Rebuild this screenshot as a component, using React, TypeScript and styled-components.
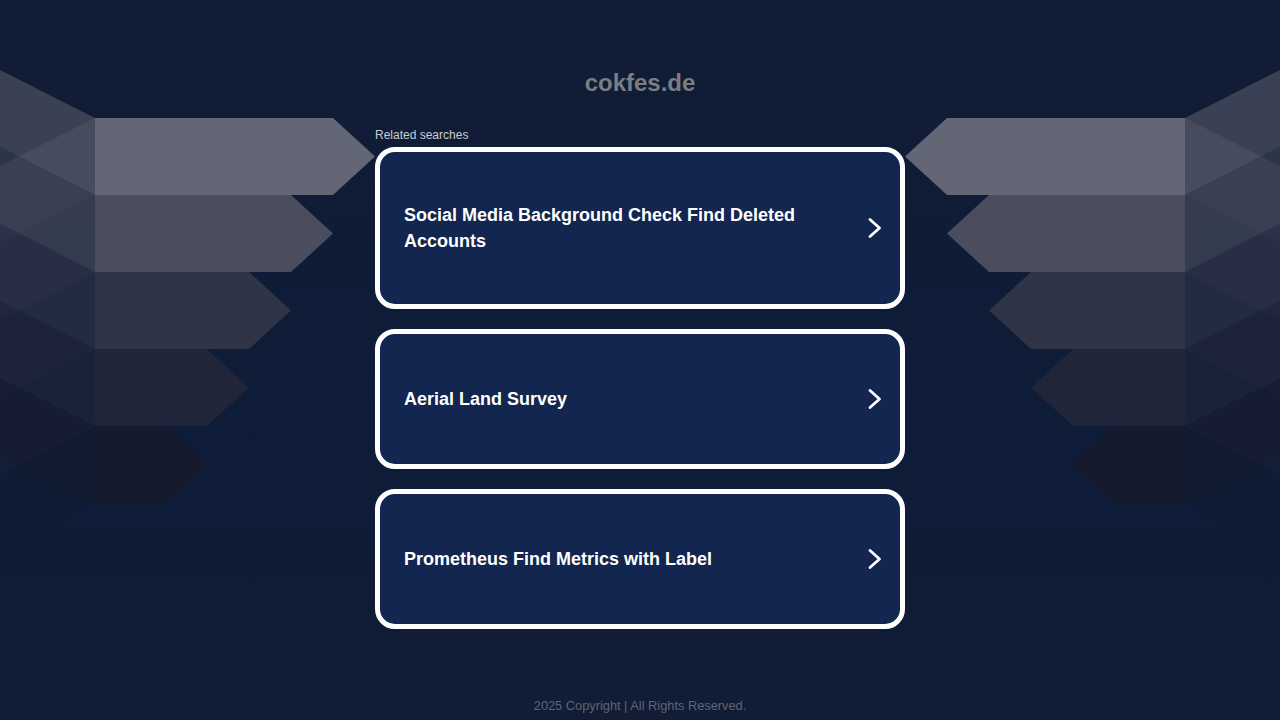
import React from 'react';
import styled, {createGlobalStyle} from 'styled-components';

const GlobalStyle = createGlobalStyle`
    html, body {
        margin: 0;
        padding: 0;
        background: #101c36;
        font-family: "Liberation Sans", Arial, sans-serif;
    }
`;

const searches = [
    'Social Media Background Check Find Deleted Accounts',
    'Aerial Land Survey',
    'Prometheus Find Metrics with Label'
];

// arrow bars on the side, top row first
const BAR_COLORS = ['#636674', '#4a4d5e', '#2f3447', '#212539', '#151a2d'];
const ROW_TOP = 118;
const ROW_H = 77;

function SideArt({$flip}: {$flip?: boolean}) {
    return (
        <ArtSvg viewBox="0 0 375 720" $flip={$flip}>
            {BAR_COLORS.map((c, i) => {
                const t = ROW_TOP + ROW_H * i;
                const b = t + ROW_H;
                return (
                    <g key={'p' + i}>
                        <polygon points={`0,${t - 48} 95,${t} 95,${b} 0,${b - 48}`} fill={c} fillOpacity={0.5} />
                        <polygon points={`0,${t + 48} 95,${t} 95,${b} 0,${b + 48}`} fill={c} fillOpacity={0.3} />
                    </g>
                );
            })}
            {BAR_COLORS.map((c, i) => {
                const t = ROW_TOP + ROW_H * i;
                const b = t + ROW_H;
                const tip = 375 - 42 * i;
                const edge = tip - 42;
                return (
                    <polygon
                        key={'b' + i}
                        points={`95,${t} ${edge},${t} ${tip},${(t + b) / 2} ${edge},${b} 95,${b}`}
                        fill={c}
                    />
                );
            })}
        </ArtSvg>
    );
}

function Chevron() {
    return (
        <svg width="14" height="22" viewBox="0 0 14 22">
            <path d="M2 2.5 L11.5 11 L2 19.5" fill="none" stroke="#ffffff" strokeWidth="2.8" strokeLinecap="round" strokeLinejoin="round" />
        </svg>
    );
}

export default function App() {
    return (
        <Page>
            <GlobalStyle />
            <SideArt />
            <Center>
                <Title>cokfes.de</Title>
                <Label>Related searches</Label>
                <List>
                    {searches.map((s) => (
                        <Card key={s} href="#">
                            <CardText>{s}</CardText>
                            <Chevron />
                        </Card>
                    ))}
                </List>
                <Footer>2025 Copyright | All Rights Reserved.</Footer>
            </Center>
            <SideArt $flip />
        </Page>
    );
}

const Page = styled.div`
    display: grid;
    grid-template-columns: 375px 530px 375px;
    width: 1280px;
    height: 720px;
    overflow: hidden;
    background: linear-gradient(180deg, #111c35 0%, #0f1c38 60%, #111c35 100%);
`;

const ArtSvg = styled.svg<{$flip?: boolean}>`
    display: block;
    width: 375px;
    height: 720px;
    transform: ${(p) => (p.$flip ? 'scaleX(-1)' : 'none')};
`;

const Center = styled.div`
    display: flex;
    flex-direction: column;
    height: 720px;
`;

const Title = styled.h1`
    margin: 69px 0 0;
    font-size: 24px;
    line-height: 28px;
    font-weight: bold;
    text-align: center;
    color: #7b7d83;
`;

const Label = styled.div`
    margin-top: 31px;
    font-size: 12px;
    line-height: 15px;
    color: #c9ccd3;
`;

const List = styled.div`
    display: flex;
    flex-direction: column;
    gap: 20px;
    margin-top: 4px;
`;

const Card = styled.a`
    box-sizing: border-box;
    display: flex;
    align-items: center;
    justify-content: space-between;
    gap: 20px;
    min-height: 140px;
    padding: 50px 18px 50px 24px;
    border: 5px solid #ffffff;
    border-radius: 20px;
    background: #12264f;
    text-decoration: none;
`;

const CardText = styled.span`
    font-size: 18px;
    line-height: 26px;
    font-weight: bold;
    color: #ffffff;
    max-width: 420px;
`;

const Footer = styled.div`
    margin-top: auto;
    margin-bottom: 6px;
    font-size: 12.8px;
    line-height: 16px;
    text-align: center;
    color: #5f6575;
`;
